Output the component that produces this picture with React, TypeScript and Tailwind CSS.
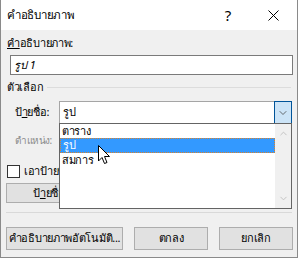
import { ChevronDown, ChevronUp } from 'lucide-react'

const font = { fontFamily: '"Noto Sans", Tahoma, sans-serif' }

function Btn({ children, className = '' }: { children: React.ReactNode; className?: string }) {
  return (
    <div
      className={`flex items-center justify-center whitespace-nowrap border border-[#adadad] bg-[#e1e1e1] text-[11px] text-black ${className}`}
    >
      {children}
    </div>
  )
}

export default function App() {
  const items = [
    { t: 'ตาราง', h: 'h-[14px]' },
    { t: 'รูป', h: 'h-[15px]' },
    { t: 'สมการ', h: 'h-[14px]' },
  ]
  return (
    <div className="h-[259px] w-[299px] bg-white tracking-[-0.3px]" style={font}>
      <div className="flex h-[258px] w-[298px] flex-col border-x border-b border-[#8a8a8a] bg-[#f0f0f0]">
        {/* title bar */}
        <div className="flex h-[30px] shrink-0 items-center bg-white pl-[6px] text-[11.5px] text-black">
          <span className="flex-1 leading-none">คำอธิบายภาพ</span>
          <span className="mr-[37px] text-[15px] leading-none">?</span>
          <svg width="11" height="11" viewBox="0 0 11 11" className="mr-[18px]">
            <path d="M0.5 0.5 L10.5 10.5 M10.5 0.5 L0.5 10.5" stroke="#000" strokeWidth="1" />
          </svg>
        </div>

        <div className="relative flex flex-col text-[11px] text-black">
          <div className="mt-[6px] h-[14px] pl-[6px] leading-[14px]">
            <span className="underline">ค</span>ำอธิบายภาพ:
          </div>
          <div className="ml-[9px] mt-[5px] flex h-[20px] w-[283px] items-center border border-[#7a7a7a] bg-white pl-[3px] italic tracking-normal">
            รูป&nbsp;1
          </div>

          <div className="mt-[5px] flex h-[14px] items-center pl-[6px] leading-[14px]">
            <span>ตัวเลือก</span>
            <div className="ml-[4px] mr-[6px] h-px flex-1 bg-[#dcdcdc]" />
          </div>

          {/* label combobox */}
          <div className="mt-[7px] flex h-[23px] items-center">
            <span className="w-[58px] pl-[14px]">
              ป้<span className="underline">า</span>ยชื่อ:
            </span>
            <div className="relative flex h-[23px] w-[233px] items-center border border-[#a5a5a5] bg-white">
              <span className="flex-1 pl-[3px]">รูป</span>
              <div className="-mr-px flex h-[23px] w-[18px] items-center justify-center border border-[#005499] bg-[#cce4f7]">
                <ChevronDown size={12} strokeWidth={1.5} color="#404040" />
              </div>

              {/* dropdown list */}
              <div className="absolute left-[-1px] top-[21px] z-10 flex h-[86px] w-[233px] border border-[#646464] bg-white">
                <div className="flex flex-1 flex-col">
                  {items.map((it) => (
                    <div
                      key={it.t}
                      className={`flex ${it.h} items-center pl-[2px] ${
                        it.t === 'รูป'
                          ? 'border border-dotted border-[#d9822b] bg-[#3399ff] text-white'
                          : ''
                      }`}
                    >
                      {it.t}
                    </div>
                  ))}
                </div>
                <div className="flex w-[16px] flex-col items-center justify-between bg-[#f0f0f0] py-[4px]">
                  <ChevronUp size={11} strokeWidth={2} color="#c0c0c0" />
                  <ChevronDown size={11} strokeWidth={2} color="#c0c0c0" />
                </div>
              </div>
            </div>
          </div>

          <div className="mt-[9px] h-[14px] pl-[14px] text-[10px] leading-[14px] tracking-[-0.5px] text-[#8a8a8a]">
            ตำแหน่ง:
          </div>

          <div className="mt-[18px] flex h-[13px] items-center pl-[6px]">
            <div className="h-[13px] w-[13px] shrink-0 border border-[#333] bg-white" />
            <span className="ml-[4px] whitespace-nowrap">เอาป้ายชื่อออกจากคำอธิบายภาพ</span>
          </div>

          <div className="mt-[5px] flex pl-[5px]">
            <Btn className="h-[20px] w-[112px]">
              ป้<span className="underline">า</span>ยชื่อใหม่...
            </Btn>
          </div>

          <div className="mx-[5px] mt-[9px] h-px bg-[#d9d9d9]" />

          <div className="mt-[14px] flex items-center pl-[5px]">
            <Btn className="h-[23px] w-[117px]">คำอธิบายภาพอัตโนมัติ...</Btn>
            <Btn className="ml-[11px] h-[23px] w-[74px]">ตกลง</Btn>
            <Btn className="ml-[11px] h-[23px] w-[74px]">ยกเลิก</Btn>
          </div>

          {/* mouse pointer */}
          <svg
            width="13"
            height="20"
            viewBox="0 0 13 20"
            className="absolute left-[97px] top-[115px] z-20"
          >
            <path
              d="M0.5 0.5 L0.5 16 L4 12.5 L6.5 18.5 L9 17.5 L6.5 11.5 L11.5 11.5 Z"
              fill="#fff"
              stroke="#000"
              strokeWidth="1"
              strokeLinejoin="miter"
            />
          </svg>
        </div>
      </div>
    </div>
  )
}
